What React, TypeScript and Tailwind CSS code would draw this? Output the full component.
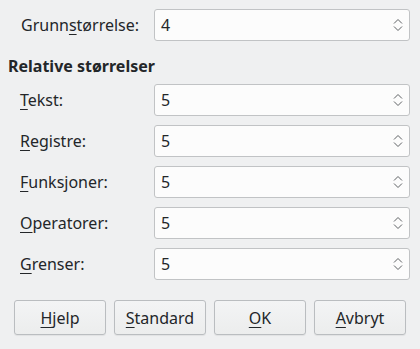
import React from "react";

function Spin({value}: {value: string}) {
    return <div className="flex h-[32px] w-[256px] items-center rounded-[3px] border border-[#c1c3c5] bg-[#fcfcfc] pl-[6px] pr-[5px]">
        <span className="flex-1 text-[16px] text-[#232629]">{value}</span>
        <svg width="12" height="20" viewBox="0 0 12 20" fill="none" stroke="#5e6164" strokeWidth="1">
            <path d="M2 8.5L6 4.5L10 8.5"/>
            <path d="M2 11.5L6 15.5L10 11.5"/>
        </svg>
    </div>
}

function Label({first, rest}: {first: string, rest: string}) {
    return <span><span className="underline decoration-1 underline-offset-[3px]">{first}</span>{rest}</span>
}

function Row({first, rest, value}: {first: string, rest: string, value: string}) {
    return <div className="flex h-[32px] items-center">
        <div className="w-[154px] pl-[20px]"><Label first={first} rest={rest}/></div>
        <Spin value={value}/>
    </div>
}

function Btn({first, rest}: {first: string, rest: string}) {
    return <button className="h-[35px] w-[92px] rounded-[3px] border border-[#babdc0] bg-gradient-to-b from-[#f3f4f5] to-[#eceded] text-[16px] text-[#232629] shadow-[0_1px_1px_rgba(0,0,0,0.06)]">
        <Label first={first} rest={rest}/>
    </button>
}

export default function App() {
    return <div className="h-[349px] w-[420px] bg-[#eff0f1] text-[16px] text-[#232629]" style={{fontFamily: '"Noto Sans", sans-serif'}}>
        <div className="pt-[9px]">
            <div className="flex h-[32px] items-center">
                <div className="w-[154px] pl-[21px]">Grunn<Label first="s" rest="tørrelse:"/></div>
                <Spin value="4"/>
            </div>
            <div className="mt-[13px] pl-[8px] font-bold leading-[24px]">Relative størrelser</div>
            <div className="mt-[6px] flex flex-col gap-[9px]">
                <Row first="T" rest="ekst:" value="5"/>
                <Row first="R" rest="egistre:" value="5"/>
                <Row first="F" rest="unksjoner:" value="5"/>
                <Row first="O" rest="peratorer:" value="5"/>
                <Row first="G" rest="renser:" value="5"/>
            </div>
            <div className="mt-[20px] flex gap-[8px] pl-[14px]">
                <Btn first="H" rest="jelp"/>
                <Btn first="S" rest="tandard"/>
                <Btn first="O" rest="K"/>
                <Btn first="A" rest="vbryt"/>
            </div>
        </div>
    </div>
}
